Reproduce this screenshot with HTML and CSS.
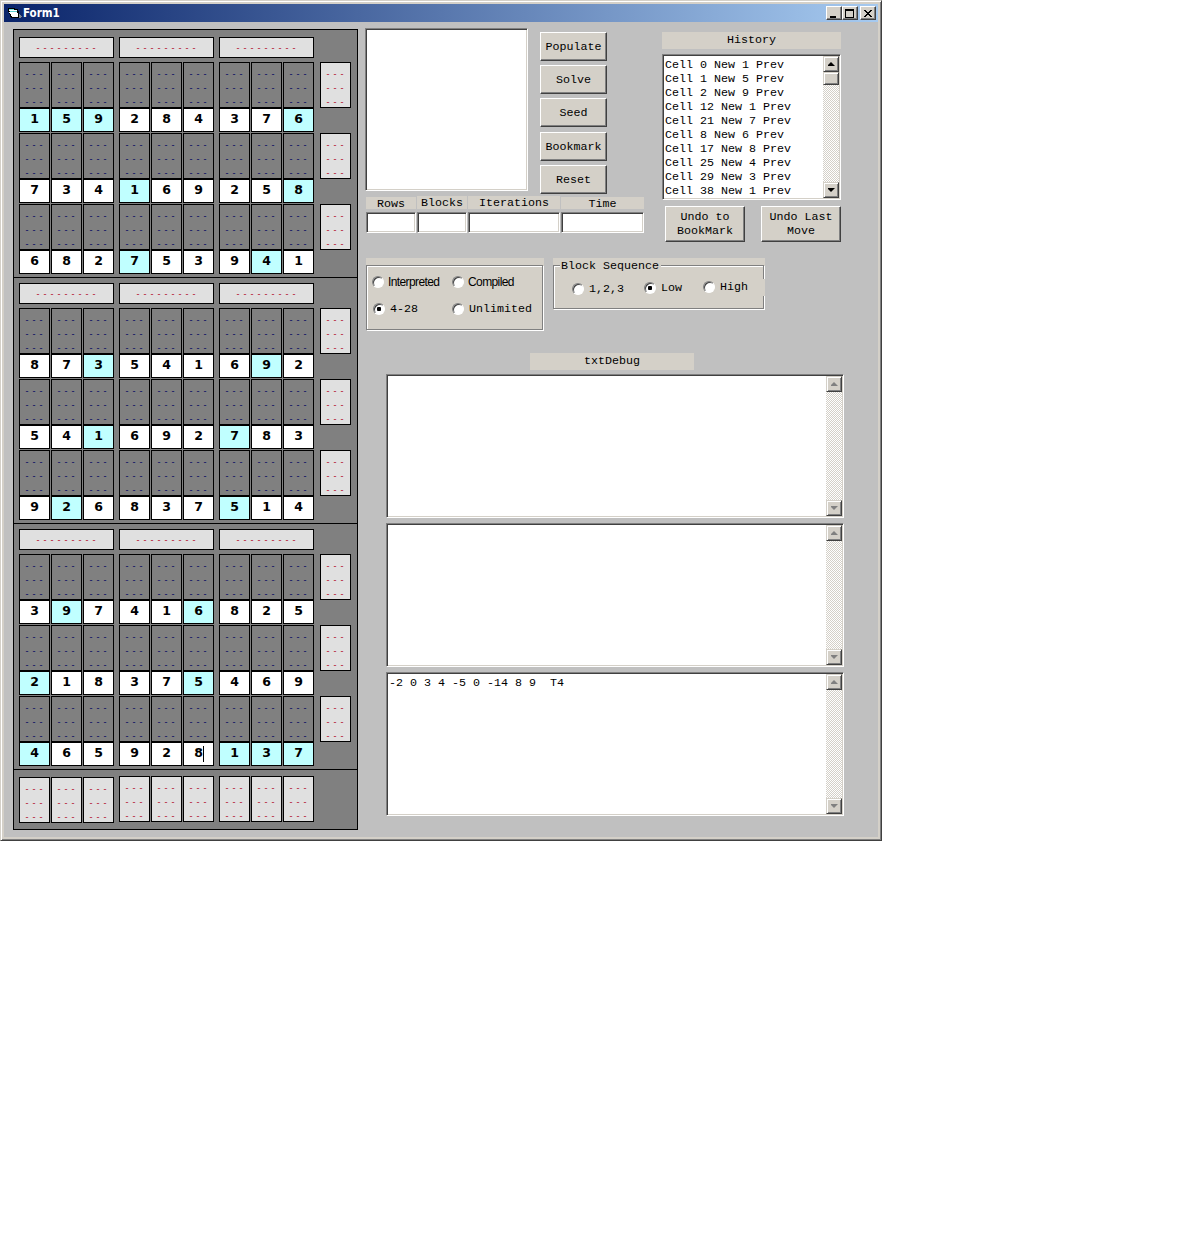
FILE: index.html
```html
<!DOCTYPE html>
<html lang="en">
<head>
<meta charset="utf-8">
<title>Form1</title>
<link rel="stylesheet" href="styles.css">
</head>
<body>
<main class="window">
  <header class="titlebar">
    <svg class="app-icon" width="14" height="12" viewBox="0 0 14 12" shape-rendering="crispEdges">
      <path d="M0 1h7v1h3v2h1v7H3V10H2V7H1V5H0z" fill="#000"/>
      <path d="M1 2h5v1H1z" fill="#7fe0e0"/>
      <path d="M1 3h8v1H1z" fill="#fff"/>
      <path d="M2 4h7v1H2z" fill="#5fd0d0"/>
      <path d="M1 5h8v1h1v4H4V9H3V7H2V6H1z" fill="#fff"/>
      <path d="M11 7h1v1h1v1h1v1h-1v1h-2z" fill="#808890"/>
    </svg>
    <h1 class="title">Form1</h1>
    <div class="controls">
      <button class="control" aria-label="Minimize"><svg width="12" height="10" shape-rendering="crispEdges"><path d="M2 7h6v2H2z"/></svg></button>
      <button class="control" aria-label="Maximize"><svg width="12" height="10" shape-rendering="crispEdges"><path d="M1 0h9v9H1zM2 2v6h7V2z" fill-rule="evenodd"/></svg></button>
      <button class="control close" aria-label="Close"><svg width="12" height="10" shape-rendering="crispEdges"><path d="M2 1h2v1h1v1h2V2h1V1h2v1H9v1H8v1H7v1h1v1h1v1h1v1H8V7H7V6H5v1H4v1H2V7h1V6h1V5h1V4H4V3H3V2H2z"/></svg></button>
    </div>
  </header>
  <div class="client">
    <section class="board" id="board"></section>
    <div class="panel">
      <div class="top">
        <div class="runner">
          <div class="run-row">
            <div class="output sunken"></div>
            <div class="actions">
              <button class="btn">Populate</button>
              <button class="btn">Solve</button>
              <button class="btn">Seed</button>
              <button class="btn lower">Bookmark</button>
              <button class="btn">Reset</button>
            </div>
          </div>
          <div class="stats">
            <div class="stat rows"><span class="tag short">Rows</span><div class="field sunken"></div></div>
            <div class="stat blocks"><span class="tag">Blocks</span><div class="field sunken"></div></div>
            <div class="stat iterations"><span class="tag">Iterations</span><div class="field sunken"></div></div>
            <div class="stat time"><span class="tag short">Time</span><div class="field sunken"></div></div>
          </div>
        </div>
        <div class="history">
          <div class="caption">History</div>
          <div class="list sunken">
            <ul class="items">
              <li>Cell 0 New 1 Prev</li>
              <li>Cell 1 New 5 Prev</li>
              <li>Cell 2 New 9 Prev</li>
              <li>Cell 12 New 1 Prev</li>
              <li>Cell 21 New 7 Prev</li>
              <li>Cell 8 New 6 Prev</li>
              <li>Cell 17 New 8 Prev</li>
              <li>Cell 25 New 4 Prev</li>
              <li>Cell 29 New 3 Prev</li>
              <li>Cell 38 New 1 Prev</li>
            </ul>
            <div class="scroll">
              <div class="arrow up"></div><div class="thumb"></div><div class="arrow down"></div>
            </div>
          </div>
          <div class="undo">
            <button class="btn">Undo to<br>BookMark</button>
            <button class="btn">Undo Last<br>Move</button>
          </div>
        </div>
      </div>
      <div class="options">
        <div class="frame mode">
          <div class="etched">
            <label class="opt sans"><i class="radio"></i>Interpreted</label>
            <label class="opt sans"><i class="radio"></i>Compiled</label>
            <label class="opt range"><i class="radio on"></i>4-28</label>
            <label class="opt"><i class="radio"></i>Unlimited</label>
          </div>
        </div>
        <div class="frame sequence">
          <div class="etched">
            <span class="legend">Block Sequence</span>
            <label class="opt one"><i class="radio"></i>1,2,3</label>
            <label class="opt low"><i class="radio on"></i>Low</label>
            <label class="opt high"><i class="radio"></i>High</label>
          </div>
        </div>
      </div>
      <div class="debug">
        <div class="caption">txtDebug</div>
        <div class="area sunken"><div class="text"></div><div class="scroll off"><div class="arrow up"></div><div class="arrow down"></div></div></div>
        <div class="area sunken"><div class="text"></div><div class="scroll off"><div class="arrow up"></div><div class="arrow down"></div></div></div>
        <div class="area sunken"><div class="text">-2 0 3 4 -5 0 -14 8 9  T4</div><div class="scroll off"><div class="arrow up"></div><div class="arrow down"></div></div></div>
      </div>
    </div>
  </div>
</main>
<script src="board.js"></script>
</body>
</html>
```
FILE: board.js
```js
// Each row holds nine digits; an asterisk follows a given (highlighted) digit.
const rows = [
  "1*5*9*284376*", "7341*69258*", "6827*5394*1",
  "873*54169*2", "541*6927*83", "92*68375*14",
  "39*7416*825", "2*18375*469", "4*659281*3*7*"
];
const marks = "---\n---\n---";
const box = (cls, text) => `<div class="${cls}">${text}</div>`;
const triple = (items) => box("triple", items.join(""));
const threes = (items) => [0, 3, 6].map((i) => triple(items.slice(i, i + 3))).join("");

const renderRow = (row, r) => {
  const cells = row.match(/\d\*?/g).map((c, i) => {
    const caret = r === 8 && i === 5 ? '<span class="caret"></span>' : "";
    return box("cell", box("marks", marks) + box(c[1] ? "digit given" : "digit", c[0] + caret));
  });
  return box("row", threes(cells) + box("marks side", marks));
};

let html = "";
for (let band = 0; band < 3; band++) {
  const heads = box("row heads", box("head", "---------").repeat(3));
  const body = rows.slice(band * 3, band * 3 + 3).map((r, i) => renderRow(r, band * 3 + i)).join("");
  html += box("band", heads + body);
}
html += box("row columns", threes(Array(9).fill(box("marks side", marks))));
document.getElementById("board").innerHTML = html;
```
FILE: styles.css
```css
* { box-sizing: border-box; }
body {
  margin: 0;
  background: #fff;
  color: #000;
  font: 11.667px/14px "Liberation Mono", monospace;
}
button { font: inherit; color: inherit; padding: 0; }

.window {
  width: 882px;
  height: 841px;
  border: 1px solid;
  border-color: #d4d0c8 #404040 #404040 #d4d0c8;
  padding: 2px;
  background: #c0c0c0;
  box-shadow: inset 1px 1px #fff, inset -1px -1px #808080, inset 3px 3px #d4d0c8, inset -3px -3px #d4d0c8;
}
.titlebar {
  display: flex;
  align-items: center;
  height: 18px;
  margin: 1px;
  padding: 0 2px 0 4px;
  background: linear-gradient(90deg, #0a246a, #a6caf0);
}
.title {
  flex: 1;
  margin: 0 0 0 1px;
  color: #fff;
  font: bold 11.5px/19px "DejaVu Sans Condensed", "DejaVu Sans", sans-serif;
}
.controls { display: flex; }
.control {
  width: 16px;
  height: 14px;
  border: 1px solid;
  border-color: #fff #404040 #404040 #fff;
  background: #d4d0c8;
  box-shadow: inset -1px -1px #808080;
}
.control svg { display: block; margin-left: 1px; margin-top: 1px; }
.close { margin-left: 2px; }

.client { display: flex; gap: 7px; padding: 5px 0 0 10px; }

/* board */
.board {
  width: 345px;
  height: 801px;
  margin-top: 1px;
  padding-top: 2px;
  border: 1px solid #000;
  background: #808080;
}
.band { height: 246px; padding: 5px 0 0 5px; border-bottom: 1px solid #000; }
.row { display: flex; gap: 5px; height: 71px; }
.row.heads { height: 25px; }
.head, .marks {
  border: 1px solid #000;
  font: 9px/14px "Liberation Sans", sans-serif;
  letter-spacing: 4px;
  text-align: center;
}
.head { width: 95px; height: 21px; padding: 3px 0 0 3px; background: #e0e0e0; color: #b00020; }
.triple { display: flex; gap: 1px; }
.marks {
  width: 31px;
  height: 46px;
  padding: 4px 0 0 3px;
  color: #000060;
  white-space: pre;
  overflow: hidden;
}
.marks.side { background: #e0e0e0; color: #b00020; }
.row > .side { margin-left: 1px; }
.digit {
  width: 31px;
  height: 24px;
  border: 1px solid #000;
  background: #fff;
  font: bold 12.5px/20px "DejaVu Sans", sans-serif;
  text-align: center;
}
.given { background: #c0ffff; }
.caret { display: inline-block; width: 1px; height: 16px; margin-right: -1px; background: #000; vertical-align: -5px; }
.columns { padding: 6px 0 0 5px; height: 59px; }
.columns .triple:first-child { margin-top: 1px; }

/* shared controls */
.sunken {
  border: 1px solid;
  border-color: #808080 #fff #fff #808080;
  background: #fff;
  box-shadow: inset 1px 1px #404040, inset -1px -1px #d4d0c8;
}
.btn {
  border: 1px solid;
  border-color: #fff #404040 #404040 #fff;
  background: #d4d0c8;
  box-shadow: inset -1px -1px #808080;
}
.caption { height: 17px; background: #d4d0c8; text-align: center; line-height: 16px; }
.scroll {
  display: flex;
  flex-direction: column;
  width: 16px;
  background: repeating-conic-gradient(#d4d0c8 0 25%, #fff 0 50%) 0 0 / 2px 2px;
}
.arrow, .thumb {
  width: 16px;
  height: 16px;
  border: 1px solid;
  border-color: #d4d0c8 #404040 #404040 #d4d0c8;
  background: #d4d0c8;
  box-shadow: inset 1px 1px #fff, inset -1px -1px #808080;
}
.thumb { height: 13px; }
.arrow { display: flex; align-items: center; justify-content: center; }
.arrow::before { content: ""; width: 7px; height: 4px; background: #000; }
.up::before { clip-path: polygon(3px 0, 4px 0, 4px 1px, 5px 1px, 5px 2px, 6px 2px, 6px 3px, 7px 3px, 7px 4px, 0 4px, 0 3px, 1px 3px, 1px 2px, 2px 2px, 2px 1px, 3px 1px); }
.down::before { clip-path: polygon(0 0, 7px 0, 7px 1px, 6px 1px, 6px 2px, 5px 2px, 5px 3px, 4px 3px, 4px 4px, 3px 4px, 3px 3px, 2px 3px, 2px 2px, 1px 2px, 1px 1px, 0 1px); }
.off .arrow::before { background: #808080; }
.down { margin-top: auto; }

/* upper right */
.panel { width: 479px; }
.top { display: flex; height: 230px; }
.runner { width: 297px; }
.run-row { display: flex; height: 168px; }
.output { width: 163px; height: 163px; }
.actions { display: flex; flex-direction: column; gap: 4px; padding: 4px 0 0 12px; }
.actions .btn { width: 67px; height: 29px; flex: none; }
.actions .lower { margin-top: 1px; }
.stats { display: flex; padding-left: 1px; }
.tag { display: block; height: 13px; margin-bottom: 3px; background: #d4d0c8; text-align: center; line-height: 15px; }
.tag.short { height: 12px; margin-top: 1px; }
.field { height: 21px; }
.rows, .blocks { width: 50px; margin-right: 1px; }
.iterations { width: 92px; margin-right: 1px; }
.time { width: 83px; }

.history { width: 179px; padding-top: 4px; }
.list { display: flex; height: 146px; margin-top: 5px; padding: 1px; }
.items { flex: 1; margin: 0; padding: 2px 0 0 1px; list-style: none; }
.undo { display: flex; justify-content: space-between; margin-top: 6px; padding-left: 3px; }
.undo .btn { width: 80px; height: 36px; }

/* option frames */
.options { display: flex; gap: 9px; padding-left: 1px; height: 95px; }
.frame { padding-top: 7px; background: #d4d0c8; }
.etched { border: 1px solid #808080; box-shadow: inset 1px 1px #fff, 1px 1px #fff; }
.mode { width: 178px; height: 72px; }
.mode .etched {
  display: grid;
  grid-template-columns: 80px 1fr;
  grid-template-rows: 27px 27px;
  width: 177px;
  height: 65px;
  padding: 3px 0 0 5px;
}
.opt { display: flex; align-items: center; gap: 5px; height: 25px; white-space: nowrap; }
.sans { gap: 4px; font: 12px/14px "Liberation Sans", sans-serif; letter-spacing: -0.6px; }
.range { padding-left: 1px; }
.radio {
  flex: none;
  width: 12px;
  height: 12px;
  border: 1px solid;
  border-color: #808080 #fff #fff #808080;
  border-radius: 50%;
  background: #fff;
  box-shadow: inset 1px 1px #404040;
}
.radio.on { background: radial-gradient(circle at 50% 50%, #000 2px, #fff 2.5px); }
.sequence { width: 212px; height: 52px; }
.sequence .etched {
  position: relative;
  display: grid;
  grid-template-columns: 72px 59px 1fr;
  grid-template-rows: 9px 25px;
  width: 211px;
  height: 44px;
  padding-left: 18px;
}
/* the High option's background covers part of the frame's right edge */
.sequence .etched::after {
  content: "";
  position: absolute;
  top: 13px;
  right: -2px;
  width: 3px;
  height: 17px;
  background: #d4d0c8;
}
.legend { grid-column: 1 / 4; justify-self: start; height: 14px; margin: -7px 0 0 -12px; padding: 0 2px 0 1px; background: #d4d0c8; }
.one { padding-top: 3px; }
.low { padding-top: 1px; }
.high { padding-bottom: 1px; }

/* debug output */
.debug { display: flex; flex-direction: column; gap: 5px; padding-left: 21px; }
.debug .caption { width: 164px; margin-left: 144px; margin-bottom: -1px; }
.area { display: flex; width: 458px; height: 144px; padding: 1px; }
.text { flex: 1; padding: 2px 0 0 1px; white-space: pre; }
```
